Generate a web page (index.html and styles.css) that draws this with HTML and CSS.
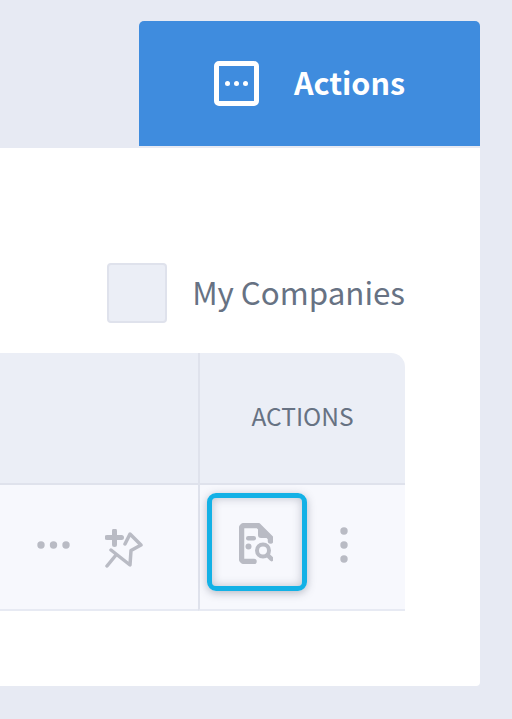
FILE: index.html
```html
<!DOCTYPE html>
<html>
  <head>
    <meta charset="utf-8">
    <title>Companies</title>
    <link rel="stylesheet" href="styles.css">
  </head>
  <body>
    <div class="tabs">
      <div class="tab-actions">
        <svg class="tab-icon" width="45" height="45" viewBox="0 0 45 45">
          <rect x="2.500" y="2.500" width="40" height="40" rx="2.500" fill="none" stroke="#fff" stroke-width="5"/>
          <circle cx="13.500" cy="22.500" r="2.500" fill="#fff"/>
          <circle cx="22.500" cy="22.500" r="2.500" fill="#fff"/>
          <circle cx="31.500" cy="22.500" r="2.500" fill="#fff"/>
        </svg>
        <span class="tab-label">Actions</span>
      </div>
    </div>
    <div class="card">
      <div class="filter">
        <div class="checkbox"></div>
        <label class="filter-label">My Companies</label>
      </div>
      <div class="table">
        <div class="cell head-main"></div>
        <div class="cell head-actions">ACTIONS</div>
        <div class="cell row-main">
          <svg class="soft" width="33" height="8" viewBox="0 0 33 8">
            <circle cx="4" cy="4" r="3.700" fill="#b9bbc4"/>
            <circle cx="16.500" cy="4" r="3.700" fill="#b9bbc4"/>
            <circle cx="29" cy="4" r="3.700" fill="#b9bbc4"/>
          </svg>
          <svg class="pin soft" width="38" height="39" viewBox="0 0 38 39" fill="none" stroke="#b9bbc4" stroke-width="3.500" stroke-linecap="round" stroke-linejoin="round">
            <path d="M2 8.500H16.500M9.500 2V15.500" stroke-width="5"/>
            <path d="M6 21L25 36L26 21.500L36 16L25 5L20 15"/>
            <path d="M11 26L2 37"/>
          </svg>
        </div>
        <div class="cell row-actions">
          <div class="view-btn">
            <svg class="soft" width="34" height="41" viewBox="0 0 34 41">
              <path d="M15 38.500H5.500A3 3 0 0 1 2.500 35.500V5.500A3 3 0 0 1 5.500 2.500H19L31.500 15V18" fill="none" stroke="#b9bbc4" stroke-width="5.500" stroke-linecap="round" stroke-linejoin="round"/>
              <path d="M19 3V12A3 3 0 0 0 22 15H31Z" fill="#b9bbc4"/>
              <rect x="7" y="13" width="10" height="4.500" rx="2.200" fill="#b9bbc4"/>
              <circle cx="9.500" cy="23.500" r="3" fill="#b9bbc4"/>
              <circle cx="24" cy="27.500" r="6" fill="none" stroke="#b9bbc4" stroke-width="4"/>
              <path d="M28.500 32L32.500 36" stroke="#b9bbc4" stroke-width="4.500" stroke-linecap="round"/>
            </svg>
          </div>
          <svg class="kebab soft" width="8" height="36" viewBox="0 0 8 36">
            <circle cx="4" cy="4" r="3.700" fill="#b9bbc4"/>
            <circle cx="4" cy="18" r="3.700" fill="#b9bbc4"/>
            <circle cx="4" cy="32" r="3.700" fill="#b9bbc4"/>
          </svg>
        </div>
      </div>
    </div>
  </body>
</html>
```

FILE: styles.css
```css
html, body {
  height: 100%;
}

body {
  margin: 0;
  padding: 21px 32px 33px 0;
  box-sizing: border-box;
  display: flex;
  flex-direction: column;
  background: #e7eaf3;
  font-family: "Noto Sans CJK JP", "Noto Sans", sans-serif;
  overflow: hidden;
}

.tabs {
  display: flex;
  justify-content: flex-end;
  margin-bottom: 2px;
}

.tab-actions {
  width: 341px;
  height: 125px;
  box-sizing: border-box;
  padding-left: 75px;
  display: flex;
  align-items: center;
  gap: 35px;
  background: #3f8cde;
  border-radius: 5px 5px 0 0;
  color: #fff;
  font-size: 30.500px;
  font-weight: 700;
}

.tab-icon {
  flex: none;
}

.tab-label {
  padding-bottom: 4px;
}

.card {
  flex: 1;
  background: #fff;
  border-radius: 0 0 4px 0;
  padding: 115px 75px 0 0;
}

.filter {
  display: flex;
  justify-content: flex-end;
  align-items: center;
  gap: 25px;
  margin-bottom: 30px;
  color: #677283;
  font-size: 31.300px;
}

.filter-label {
  padding-bottom: 4px;
}

.checkbox {
  width: 60px;
  height: 60px;
  box-sizing: border-box;
  background: #ebeef6;
  border: 2px solid #dfe2ec;
  border-radius: 4px;
}

.table {
  display: grid;
  grid-template-columns: 1fr 207px;
  grid-template-rows: 132px 126px;
  border-radius: 0 14px 0 0;
  overflow: hidden;
}

.cell {
  box-sizing: border-box;
  display: flex;
  align-items: center;
}

.head-main, .head-actions {
  background: #ebeef6;
  border-bottom: 2px solid #dfe2ec;
}

.head-actions {
  justify-content: center;
  border-left: 2px solid #dfe2ec;
  color: #677283;
  font-size: 24.500px;
  padding-bottom: 5px;
}

.row-main, .row-actions {
  background: #f7f8fd;
  border-bottom: 2px solid #e7eaf3;
  padding-bottom: 4px;
}

.row-main {
  justify-content: flex-end;
  gap: 35px;
  padding-right: 55px;
}

.soft {
  filter: blur(0.5px);
}

.pin {
  margin-top: 7px;
}

.row-actions {
  border-left: 2px solid #dfe2ec;
  padding-left: 7px;
  gap: 33px;
}

.view-btn {
  width: 100px;
  height: 98px;
  margin-bottom: 7px;
  box-sizing: border-box;
  display: flex;
  align-items: center;
  justify-content: center;
  border: 5px solid #13b1e6;
  border-radius: 9px;
  box-shadow: 0 2px 8px rgba(60, 65, 90, 0.35), inset 0 0 10px rgba(60, 65, 90, 0.3);
}

.view-btn svg {
  margin-top: 4px;
  margin-right: 3px;
}

.kebab {
  flex: none;
}
```
